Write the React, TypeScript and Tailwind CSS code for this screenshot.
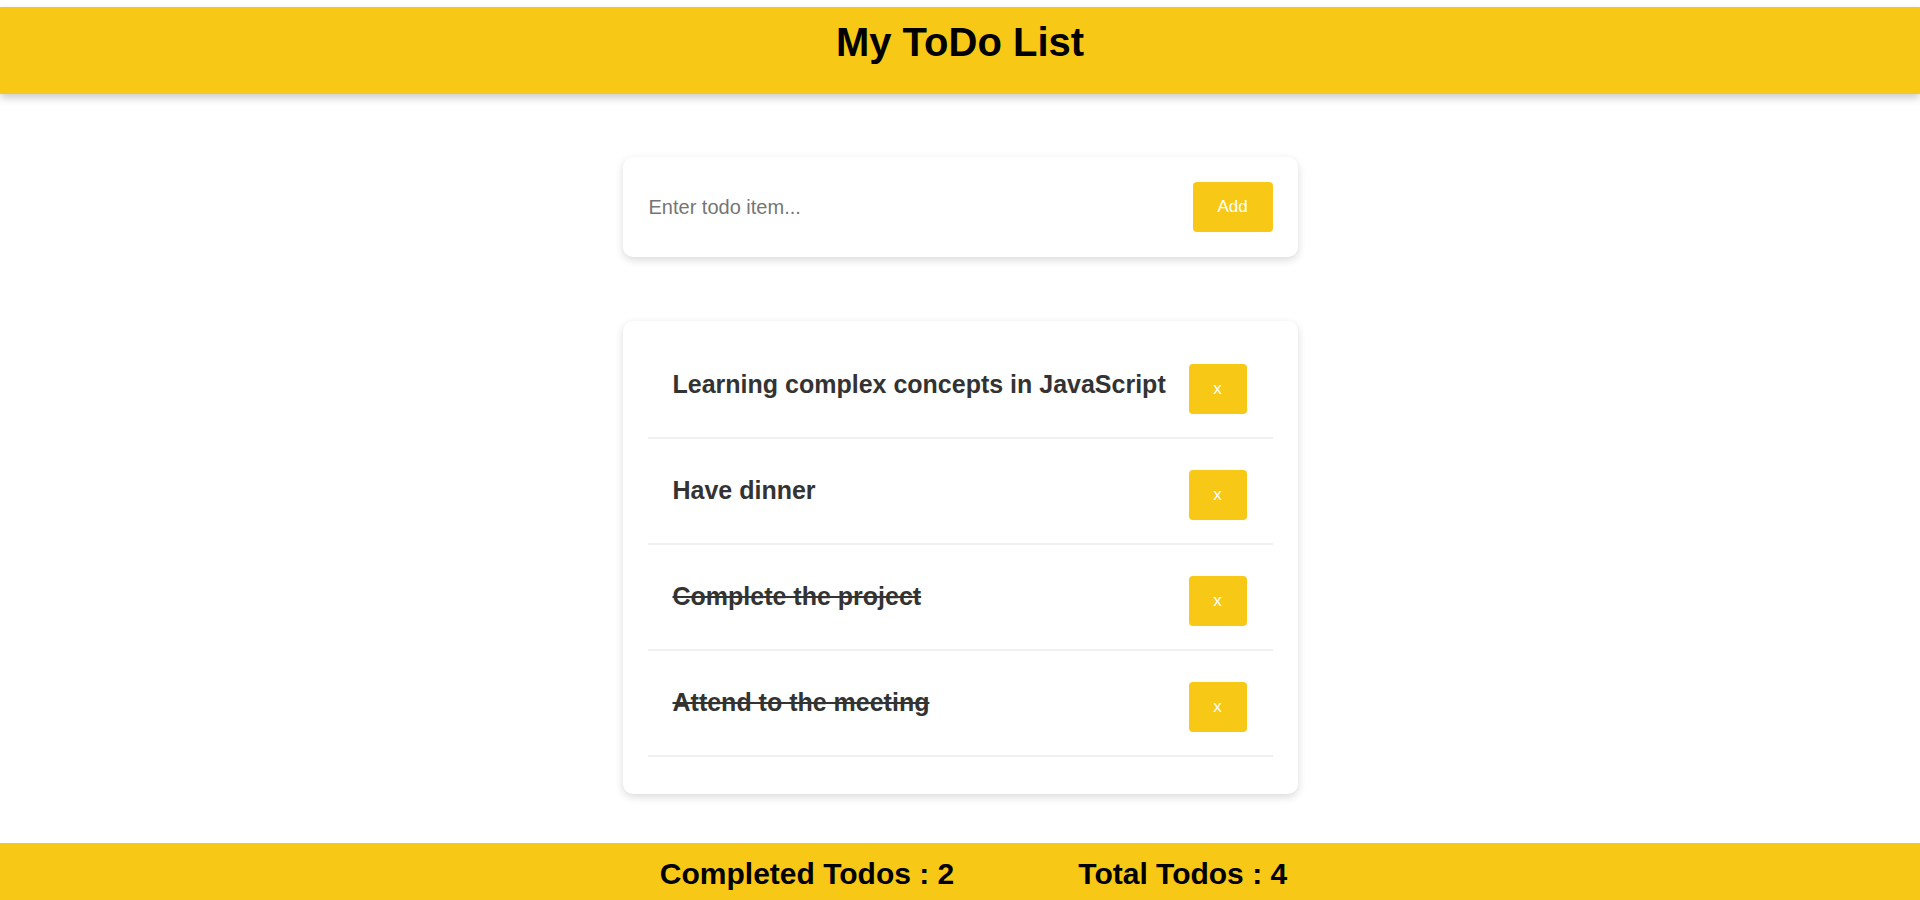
import React, { useState } from 'react';

type Todo = { id: number; text: string; done: boolean };

const initialTodos: Todo[] = [
  { id: 1, text: 'Learning complex concepts in JavaScript', done: false },
  { id: 2, text: 'Have dinner', done: false },
  { id: 3, text: 'Complete the project', done: true },
  { id: 4, text: 'Attend to the meeting', done: true },
];

export default function App() {
  const [todos, setTodos] = useState<Todo[]>(initialTodos);
  const [input, setInput] = useState('');

  const addTodo = () => {
    if (!input.trim()) return;
    setTodos([...todos, { id: Date.now(), text: input.trim(), done: false }]);
    setInput('');
  };

  const completed = todos.filter((t) => t.done).length;

  return (
    <div className="min-h-screen bg-white font-['Liberation_Sans',Arial,sans-serif] pt-[7px]">
      <header className="h-[87px] bg-[#f7c916] shadow-[0_4px_8px_rgba(0,0,0,0.2)] pt-[12px] text-center">
        <h1 className="text-[40px] font-bold text-black leading-[46px]">My ToDo List</h1>
      </header>

      <main className="flex flex-col items-center">
        <div className="mt-[63px] w-[675px] h-[100px] bg-white rounded-[10px] shadow-[0_3px_8px_rgba(0,0,0,0.15)] p-[25px] flex items-center">
          <input
            value={input}
            onChange={(e) => setInput(e.target.value)}
            onKeyDown={(e) => e.key === 'Enter' && addTodo()}
            placeholder="Enter todo item..."
            className="flex-1 text-[20px] text-[#333] placeholder:text-[#757575] outline-none bg-transparent pl-[1px]"
          />
          <button
            onClick={addTodo}
            className="w-[80px] h-[50px] bg-[#f7c916] rounded-[4px] text-white text-[17px]"
          >
            Add
          </button>
        </div>

        <div className="mt-[64px] w-[675px] bg-white rounded-[10px] shadow-[0_3px_8px_rgba(0,0,0,0.15)] px-[25px] pt-[12px] pb-[37px]">
          <ul>
            {todos.map((todo) => (
              <li
                key={todo.id}
                className="h-[106px] border-b-2 border-[#f0f0f0] flex items-center justify-between pl-[25px] pr-[26px]"
              >
                <span
                  onClick={() =>
                    setTodos(todos.map((t) => (t.id === todo.id ? { ...t, done: !t.done } : t)))
                  }
                  className={
                    'text-[25px] font-bold text-[#333] cursor-pointer ' + (todo.done ? 'line-through' : '')
                  }
                >
                  {todo.text}
                </span>
                <button
                  onClick={() => setTodos(todos.filter((t) => t.id !== todo.id))}
                  className="mt-[7px] w-[58px] h-[50px] bg-[#f7c916] rounded-[4px] text-white text-[17px] shrink-0"
                >
                  x
                </button>
              </li>
            ))}
          </ul>
        </div>
      </main>

      <footer className="mt-[49px] h-[58px] bg-[#f7c916] flex justify-center gap-[124px] pl-[27px] pt-[14px]">
        <span className="text-[30px] font-bold text-black leading-[33px]">Completed Todos : {completed}</span>
        <span className="text-[30px] font-bold text-black leading-[33px]">Total Todos : {todos.length}</span>
      </footer>
    </div>
  );
}
